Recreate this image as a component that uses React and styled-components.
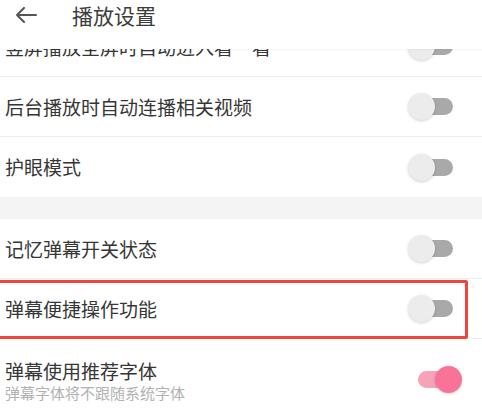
import React from "react";
import styled, { createGlobalStyle } from "styled-components";

const Global = createGlobalStyle`
  html, body { margin: 0; padding: 0; background: #fff; }
  body { font-family: "Noto Sans CJK SC", "Noto Sans", sans-serif; }
  #root { height: 417px; }
`;

const Page = styled.div`
  width: 482px;
  height: 417px;
  display: flex;
  flex-direction: column;
  overflow: hidden;
  background: #fff;
`;

const Header = styled.header`
  position: relative;
  z-index: 2;
  flex: 0 0 49px;
  box-sizing: border-box;
  display: flex;
  align-items: flex-start;
  padding: 0 0 0 15px;
  background: #fff;
  box-shadow: 0 1px 1px rgba(0, 0, 0, 0.03);
`;

const HeaderBar = styled.div`
  height: 30px;
  display: flex;
  align-items: center;
`;

const BackButton = styled.span`
  width: 22px;
  height: 16px;
  display: flex;
  margin-right: 35px;
`;

const Title = styled.h1`
  margin: 0;
  font-size: 21px;
  font-weight: 400;
  line-height: 30px;
  color: #3c3c3c;
`;

const Viewport = styled.div`
  flex: 1;
  overflow: hidden;
`;

const List = styled.div`
  margin-top: -32px;
`;

const Row = styled.div`
  position: relative;
  box-sizing: border-box;
  height: ${(p) => (p.$tall ? "78px" : "60px")};
  display: flex;
  align-items: ${(p) => (p.$tall ? "flex-start" : "center")};
  justify-content: space-between;
  padding: ${(p) => (p.$tall ? "20px 29px 0 5px" : "0 29px 0 5px")};
  border-bottom: ${(p) => (p.$last ? "none" : "1px solid #ececec")};
  margin-left: ${(p) => (p.$last ? "0" : "0")};
`;

const Divider = styled.div`
  height: 1px;
  background: #ececec;
  margin-left: 5px;
`;

const GroupGap = styled.div`
  height: 22px;
  background: #f4f4f5;
`;

const Texts = styled.div`
  display: flex;
  flex-direction: column;
`;

const Label = styled.span`
  font-size: 19px;
  line-height: 24px;
  color: #363636;
`;

const Hint = styled.span`
  font-size: 15px;
  line-height: 20px;
  color: #b2b2b2;
`;

const Track = styled.span`
  position: relative;
  flex: 0 0 37px;
  width: 37px;
  height: 17px;
  border-radius: 9px;
  background: ${(p) => (p.$on ? "#f6a3b9" : "#a9a9a9")};
  margin-right: ${(p) => (p.$on ? "-2px" : "0")};
  align-self: ${(p) => (p.$tall ? "flex-start" : "center")};
  margin-top: ${(p) => (p.$tall ? "12px" : "0")};
`;

const Thumb = styled.span`
  position: absolute;
  top: -5px;
  ${(p) => (p.$on ? "right: -7px;" : "left: -8px;")}
  width: 27px;
  height: 27px;
  border-radius: 50%;
  background: ${(p) => (p.$on ? "#fb7299" : "#ececec")};
  box-shadow: 0 1px 3px rgba(0, 0, 0, 0.18);
`;

const Highlight = styled.span`
  position: absolute;
  left: -3px;
  right: 14px;
  top: 1px;
  bottom: -1px;
  border: 3px solid #f0443c;
  border-radius: 2px;
  pointer-events: none;
`;

const Switch = ({ on, tall }) => (
  <Track $on={on} $tall={tall}>
    <Thumb $on={on} />
  </Track>
);

const BackArrow = () => (
  <svg width="22" height="16" viewBox="0 0 22 16" fill="none">
    <path
      d="M21 8H2M9 1L2 8l7 7"
      stroke="#555"
      strokeWidth="2"
      strokeLinecap="round"
      strokeLinejoin="round"
    />
  </svg>
);

export default function App() {
  return (
    <Page>
      <Global />
      <Header>
        <HeaderBar>
          <BackButton>
            <BackArrow />
          </BackButton>
          <Title>播放设置</Title>
        </HeaderBar>
      </Header>
      <Viewport>
        <List>
          <Row>
            <Label>竖屏播放全屏时自动进入看一看</Label>
            <Switch />
          </Row>
          <Row>
            <Label>后台播放时自动连播相关视频</Label>
            <Switch />
          </Row>
          <Row $last>
            <Label>护眼模式</Label>
            <Switch />
          </Row>
          <GroupGap />
          <Row>
            <Label>记忆弹幕开关状态</Label>
            <Switch />
          </Row>
          <Row>
            <Label>弹幕便捷操作功能</Label>
            <Switch />
            <Highlight />
          </Row>
          <Row $tall $last>
            <Texts>
              <Label>弹幕使用推荐字体</Label>
              <Hint>弹幕字体将不跟随系统字体</Hint>
            </Texts>
            <Switch on tall />
          </Row>
        </List>
      </Viewport>
    </Page>
  );
}
